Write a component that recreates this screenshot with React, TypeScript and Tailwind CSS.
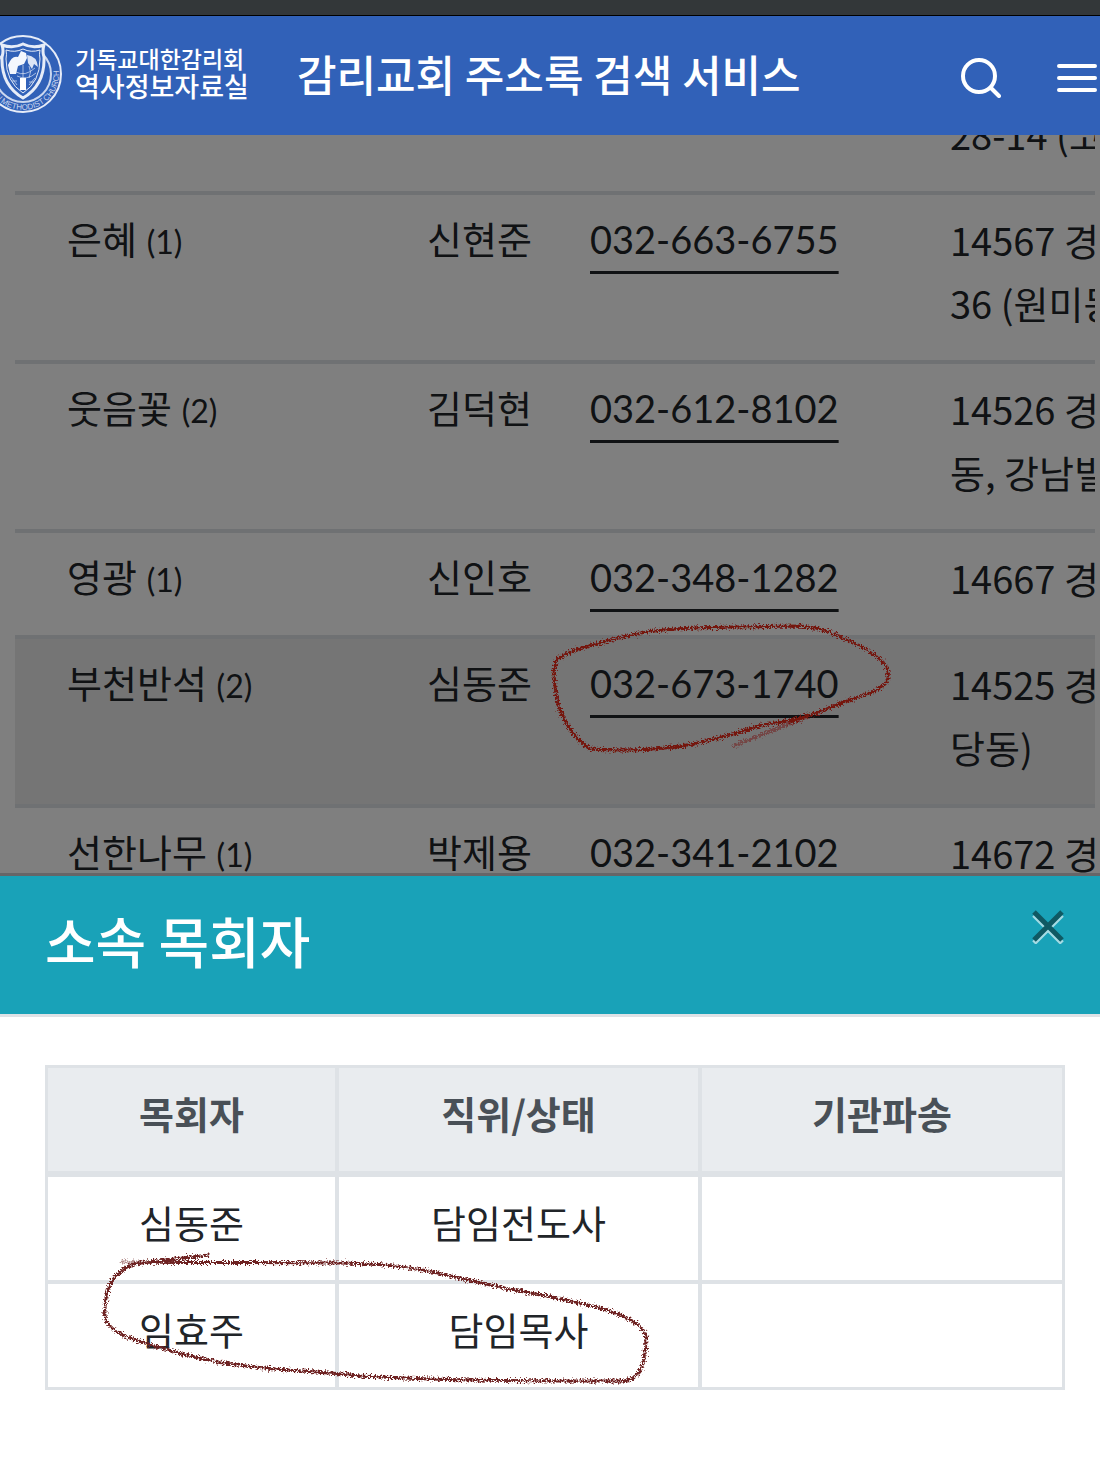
import React from 'react';

interface Church {
  name: string;
  count?: number;
  pastor: string;
  phone: string;
  address: string[];
  selected?: boolean;
}

const churches: Church[] = [
  { name: '', pastor: '', phone: '', address: ['', '28-14 (코아루)'] },
  { name: '은혜', count: 1, pastor: '신현준', phone: '032-663-6755', address: ['14567 경기도 부천시', '36 (원미동)'] },
  { name: '웃음꽃', count: 2, pastor: '김덕현', phone: '032-612-8102', address: ['14526 경기도 부천시', '동, 강남빌딩)'] },
  { name: '영광', count: 1, pastor: '신인호', phone: '032-348-1282', address: ['14667 경기도 부천시'] },
  { name: '부천반석', count: 2, pastor: '심동준', phone: '032-673-1740', address: ['14525 경기도 부천시', '당동)'], selected: true },
  { name: '선한나무', count: 1, pastor: '박제용', phone: '032-341-2102', address: ['14672 경기도 부천시'] },
];

const clergy = [
  { name: '심동준', position: '담임전도사', dispatch: '' },
  { name: '임효주', position: '담임목사', dispatch: '' },
];

const Emblem: React.FC = () => (
  <svg viewBox="0 0 80 80" className="-ml-[17px] size-20 shrink-0" fill="none" stroke="#e6ecf8" aria-hidden="true">
    <defs>
      <path id="emblem-ring" d="M10 20 A36 36 0 1 0 70 20" />
    </defs>
    <circle cx="40" cy="40" r="38" strokeWidth="2" />
    <circle cx="40" cy="40" r="28" strokeWidth="2" opacity=".85" />
    <text fill="#c9d6ef" stroke="none" className="font-['Liberation_Sans',sans-serif] text-[8px]" textAnchor="middle">
      <textPath href="#emblem-ring" startOffset="50%">
        KOREAN METHODIST CHURCH
      </textPath>
    </text>
    <path
      d="M19 11 Q30 15 40 10 Q50 15 61 11 Q59 17 61 23 Q62 51 40 64 Q18 51 19 23 Q21 17 19 11 Z"
      fill="#3161b8"
      strokeWidth="3"
    />
    <path d="M23 16 Q32 19 40 15 Q48 19 57 16 Q56 20 57 25 Q57 48 40 59 Q23 48 23 25 Q24 20 23 16 Z" strokeWidth="1" />
    <path d="M25 31 Q29 21 35 23 L38 17 L43 19 L44 24 L41 30 L35 32 L33 40 L27 40 Z" fill="#f4f7fd" stroke="none" />
    <path d="M44 21 Q54 22 55 33 L51 30 L49 35 L45 29 Z" fill="#dbe4f5" stroke="none" />
    <path d="M37 44 h6 v12 h-6 Z" fill="#fff" stroke="none" />
    <path
      d="M33 38 Q42 43 52 34 M34 42 Q44 47 53 39 M40 31 V44 M46 32 Q49 38 46 44 M28 43 L34 51 M52 44 L46 51 M29 47 L34 47 M51 48 L46 48"
      strokeWidth="1"
      opacity=".65"
    />
  </svg>
);

const Header: React.FC = () => (
  <header className="flex h-[120px] shrink-0 items-center border-t border-black bg-[#3161b8] pr-[3px] text-white">
    <a href="#home" className="flex items-center gap-3 pb-1">
      <Emblem />
      <span className="flex flex-col whitespace-nowrap pb-1 font-medium">
        <span className="text-[23px] leading-7">기독교대한감리회</span>
        <span className="text-[27px] leading-7">역사정보자료실</span>
      </span>
    </a>
    <h1 className="ml-12 whitespace-nowrap pb-1.5 text-[43px] font-medium leading-[60px]">감리교회 주소록 검색 서비스</h1>
    <div className="ml-auto flex items-center gap-14 pt-1">
      <button type="button" aria-label="검색">
        <svg viewBox="0 0 40 40" className="size-10" fill="none" stroke="currentColor" strokeWidth="4" strokeLinecap="round">
          <circle cx="18" cy="18" r="16" />
          <path d="M30 30 L38 38" />
        </svg>
      </button>
      <button type="button" aria-label="메뉴">
        <svg viewBox="0 0 40 40" className="size-10" fill="none" stroke="currentColor" strokeWidth="4" strokeLinecap="round">
          <path d="M2 8 H38 M2 20 H38 M2 32 H38" />
        </svg>
      </button>
    </div>
  </header>
);

const CrayonFilter: React.FC<{ id: string }> = ({ id }) => (
  <filter id={id} x="-5%" y="-10%" width="110%" height="120%">
    <feTurbulence type="fractalNoise" baseFrequency="0.6" numOctaves="2" seed="4" result="noise" />
    <feDisplacementMap in="SourceGraphic" in2="noise" scale="8" xChannelSelector="R" yChannelSelector="G" />
  </filter>
);

const PhoneMark: React.FC = () => (
  <svg
    viewBox="540 610 360 150"
    className="pointer-events-none absolute left-[540px] top-[475px] h-[150px] w-[360px]"
    fill="none"
    stroke="#741411"
    strokeLinecap="round"
    aria-hidden="true"
  >
    <CrayonFilter id="crayon-phone" />
    <g filter="url(#crayon-phone)">
      <path
        d="M808 715 C790 722 775 723 762 725 C735 734 700 745 665 748 C635 751 610 750 590 749 C575 739 563 721 558 704 C554 686 552 669 557 659 C570 649 610 640 640 633 C670 627 720 627 800 626 C825 628 840 636 860 646 C880 656 890 667 888 678 C886 689 870 693 850 700 C830 707 815 715 790 722"
        strokeWidth="3"
      />
      <path d="M808 717 Q770 731 734 746" strokeWidth="3" opacity=".5" />
    </g>
  </svg>
);

const ClergyMark: React.FC = () => (
  <svg
    viewBox="90 1240 570 150"
    className="pointer-events-none absolute left-[90px] top-[223px] h-[150px] w-[570px]"
    fill="none"
    stroke="#6e2322"
    strokeLinecap="round"
    aria-hidden="true"
  >
    <CrayonFilter id="crayon-clergy" />
    <g filter="url(#crayon-clergy)">
      <path
        d="M208 1255 C180 1259 150 1261 134 1264 C112 1273 104 1289 105 1315 C106 1336 145 1343 190 1356 C250 1371 310 1370 360 1376 C450 1381 540 1381 624 1381 C640 1379 646 1366 646 1336 C640 1313 580 1302 520 1291 C450 1278 425 1264 340 1263 C270 1262 200 1263 145 1262"
        strokeWidth="3"
      />
      <path d="M122 1262 H150" strokeWidth="3" opacity=".5" />
    </g>
  </svg>
);

const Directory: React.FC = () => (
  <main className="relative min-h-0 flex-1 overflow-hidden bg-white pl-[15px] pr-[5px]">
    <div className="overflow-hidden">
      <table className="-mt-[113px] w-full min-w-[1500px] table-fixed border-separate border-spacing-0 font-['Lato','Noto_Sans_CJK_KR',sans-serif] text-[38px] leading-[63px] text-[#212529]">
        <colgroup>
          <col className="w-[396px]" />
          <col className="w-[163px]" />
          <col className="w-[360px]" />
          <col />
        </colgroup>
        <tbody>
          {churches.map((church) => (
            <tr
              key={church.name}
              className={`whitespace-nowrap [&>td]:border-t-4 [&>td]:border-[#dee2e6] [&>td]:pb-[26px] [&>td]:pt-[13px] [&>td]:align-top ${
                church.selected ? 'bg-[#ebebeb]' : ''
              }`}
            >
              <td className="pl-[52px]">
                {church.name} {church.count && <small className="text-[32px] leading-none">({church.count})</small>}
              </td>
              <td className="pl-4">{church.pastor}</td>
              <td className="pl-4">
                {church.phone && (
                  <a href={`tel:${church.phone}`} className="underline decoration-[3px] underline-offset-[17px]">
                    {church.phone}
                  </a>
                )}
              </td>
              <td className="pl-4 font-['Noto_Sans_CJK_KR',sans-serif]">
                {church.address.map((line, i) => (
                  <div key={i} className="h-[63px]">
                    {line}
                  </div>
                ))}
              </td>
            </tr>
          ))}
        </tbody>
      </table>
    </div>
    <div className="absolute inset-0 bg-black/50" />
    <PhoneMark />
  </main>
);

const ClergyDialog: React.FC = () => (
  <section role="dialog" aria-labelledby="clergy-title" className="shrink-0 border-t-[3px] border-[#666668] bg-white">
    <div className="flex items-start justify-between border-b-[3px] border-[#dee2e6] bg-[#19a2b8] pb-10 pl-[45px] pr-9 pt-7 text-white">
      <h2 id="clergy-title" className="text-[55px] font-medium leading-[70px]">
        소속 목회자
      </h2>
      <button type="button" aria-label="닫기" className="mt-1">
        <svg viewBox="0 0 32 36" className="h-9 w-8" fill="none" strokeWidth="5">
          <path d="M2 7 L30 35 M30 7 L2 35" stroke="#a5dbe4" />
          <path d="M2 4 L30 32 M30 4 L2 32" stroke="#0f5963" />
        </svg>
      </button>
    </div>
    <div className="relative px-[45px] pb-[85px] pr-[35px] pt-12">
      <table className="w-full table-fixed border-separate border-spacing-0 border-[3px] border-[#dee2e6] text-center text-[38px] leading-[63px] text-[#212529]">
        <thead>
          <tr className="bg-[#e9ecef] text-[#495057] [&>th]:border-b-[6px] [&>th]:border-r-4 [&>th]:border-[#dee2e6] [&>th]:pb-[27px] [&>th]:pt-[13px] [&>th:last-child]:border-r-0">
            <th className="w-[291px]">목회자</th>
            <th className="w-[363px]">직위/상태</th>
            <th>기관파송</th>
          </tr>
        </thead>
        <tbody>
          {clergy.map((person) => (
            <tr
              key={person.name}
              className="[&>td]:border-b-4 [&>td]:border-r-4 [&>td]:border-[#dee2e6] [&>td]:pb-[27px] [&>td]:pt-[13px] last:[&>td]:border-b-0 [&>td:last-child]:border-r-0"
            >
              <td>{person.name}</td>
              <td>{person.position}</td>
              <td>{person.dispatch}</td>
            </tr>
          ))}
        </tbody>
      </table>
      <ClergyMark />
    </div>
  </section>
);

export default function App() {
  return (
    <div className="flex h-screen flex-col overflow-hidden font-['Noto_Sans_CJK_KR',sans-serif]">
      <div className="h-[15px] shrink-0 bg-[#333739]" />
      <Header />
      <Directory />
      <ClergyDialog />
    </div>
  );
}
